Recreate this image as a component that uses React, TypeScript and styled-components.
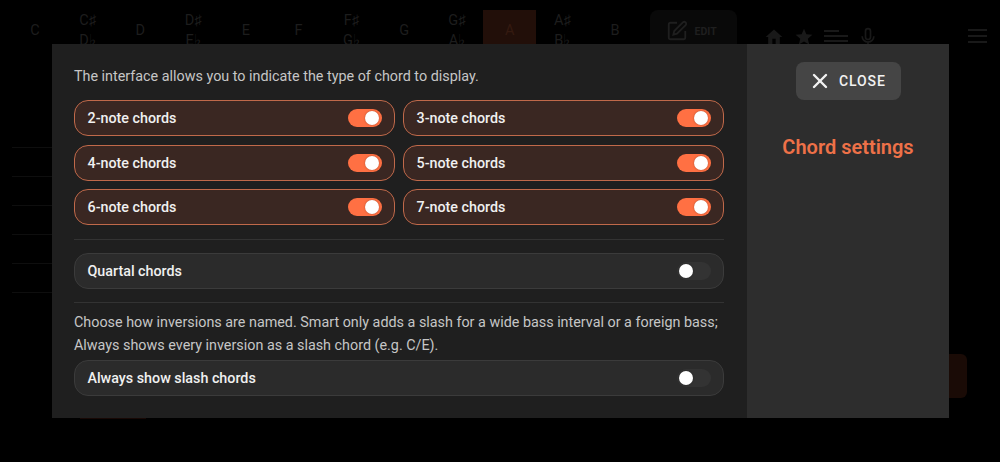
import React from 'react';
import styled, { createGlobalStyle } from 'styled-components';
import { X } from 'lucide-react';

const ORANGE = '#ff7043';
const NOTES = [['C'], ['C♯', 'D♭'], ['D'], ['D♯', 'E♭'], ['E'], ['F'], ['F♯', 'G♭'], ['G'], ['G♯', 'A♭'], ['A'], ['A♯', 'B♭'], ['B']];
const CHORDS = ['2-note chords', '3-note chords', '4-note chords', '5-note chords', '6-note chords', '7-note chords'];

const GlobalStyle = createGlobalStyle`
    html, body { margin: 0; padding: 0; background: #000; }
    body { font-family: Roboto, "Liberation Sans", sans-serif; }
`;

const Page = styled.div`
    position: relative;
    width: 1000px;
    height: 462px;
    overflow: hidden;
    background: #000;
`;

const TopBar = styled.div`
    display: flex;
    align-items: flex-start;
    padding: 10px 0 0 8.5px;
`;

const NoteCell = styled.div<{ $active?: boolean }>`
    width: 52.75px;
    height: 42px;
    flex: none;
    display: flex;
    flex-direction: column;
    align-items: center;
    justify-content: center;
    font-size: 14.5px;
    line-height: 20px;
    color: ${p => (p.$active ? '#351a10' : '#1d1d1d')};
    background: ${p => (p.$active ? '#220f09' : 'transparent')};
`;

const EditBox = styled.div`
    width: 87px;
    height: 42px;
    margin-left: 8px;
    flex: none;
    display: flex;
    align-items: center;
    gap: 7px;
    padding-left: 16px;
    box-sizing: border-box;
    border-radius: 8px;
    background: #090909;
    color: #1f1f1f;
    font-size: 10.5px;
    font-weight: 700;
`;

const IconGroup = styled.div`
    display: flex;
    align-items: center;
    gap: 10px;
    margin: 16px 0 0 27px;
    color: #191919;
`;

const Burger = styled.div`
    margin: 19px 0 0 90px;
    width: 19px;
    height: 14px;
    border-top: 2px solid #191919;
    border-bottom: 2px solid #191919;
    position: relative;
    box-sizing: border-box;
    &::after {
        content: "";
        position: absolute;
        left: 0;
        right: 0;
        top: 4px;
        height: 2px;
        background: #191919;
    }
`;

const Staff = styled.div`
    display: flex;
    flex-direction: column;
    gap: 28px;
    width: 40px;
    margin: 95px 0 0 12px;
`;

const StaffLine = styled.div`
    height: 1px;
    background: #0e0e0e;
`;

const GhostButton = styled.div`
    position: absolute;
    left: 940px;
    top: 354px;
    width: 27px;
    height: 44px;
    border-radius: 6px;
    background: #1a0b06;
`;

const GhostEdge = styled.div`
    position: absolute;
    left: 80px;
    top: 418px;
    width: 66px;
    height: 1px;
    background: #180805;
`;

const Modal = styled.div`
    position: absolute;
    left: 51.5px;
    top: 44px;
    width: 897.5px;
    height: 374px;
    display: flex;
    background: #1f1f1f;
`;

const Content = styled.div`
    width: 695.5px;
    flex: none;
    box-sizing: border-box;
    padding: 21px 23px 0 22.5px;
`;

const Side = styled.aside`
    flex: 1;
    display: flex;
    flex-direction: column;
    align-items: center;
    padding-top: 18px;
    background: #2d2d2d;
`;

const CloseButton = styled.button`
    width: 105px;
    height: 38px;
    padding: 0 0 0 12px;
    border: 0;
    border-radius: 8px;
    display: flex;
    align-items: center;
    gap: 7.5px;
    background: #454545;
    color: #f2f2f2;
    font-family: inherit;
    font-size: 14px;
    font-weight: 500;
    letter-spacing: 0.9px;
`;

const SideTitle = styled.h2`
    margin: 34px 0 0;
    font-size: 20px;
    line-height: 26px;
    font-weight: 600;
    color: #ee7148;
`;

const Help = styled.p`
    margin: 0;
    font-size: 14.35px;
    line-height: 23px;
    white-space: nowrap;
    color: #c6c6c6;
`;

const ChordGrid = styled.div`
    display: grid;
    grid-template-columns: 321px 321px;
    gap: 8.7px 8px;
    margin: 12px 0 13.6px;
`;

const Row = styled.div<{ $on?: boolean }>`
    height: 36px;
    box-sizing: border-box;
    padding: 0 12px 0 12.5px;
    display: flex;
    align-items: center;
    justify-content: space-between;
    border-radius: 14px;
    border: 1px solid ${p => (p.$on ? '#c0694a' : '#3b3b3b')};
    background: ${p => (p.$on ? '#3a2722' : '#2b2b2b')};
    color: #f0f0f0;
    font-size: 14.3px;
    font-weight: 500;
`;

const Track = styled.span<{ $on?: boolean }>`
    position: relative;
    width: 34px;
    height: 18px;
    border-radius: 9px;
    background: ${p => (p.$on ? ORANGE : '#333')};
`;

const Thumb = styled.span<{ $on?: boolean }>`
    position: absolute;
    top: 2px;
    left: ${p => (p.$on ? '17px' : '2px')};
    width: 14px;
    height: 14px;
    border-radius: 50%;
    background: #fff;
    box-shadow: 0 0 2px rgba(0, 0, 0, 0.35);
`;

const Divider = styled.hr`
    margin: 0 0 13px;
    height: 1px;
    border: 0;
    background: #333;
`;

const SecondDivider = styled(Divider)`
    margin-top: 13px;
`;

const InversionHelp = styled(Help)`
    margin: -5px 0 3px;
`;

function Toggle({ label, on }: { label: string; on?: boolean }) {
    return (
        <Row $on={on}>
            {label}
            <Track $on={on}><Thumb $on={on} /></Track>
        </Row>
    );
}

export default function App() {
    return (
        <Page>
            <GlobalStyle />
            <TopBar>
                {NOTES.map(names => (
                    <NoteCell key={names[0]} $active={names[0] === 'A'}>
                        {names.map(n => <span key={n}>{n}</span>)}
                    </NoteCell>
                ))}
                <EditBox>
                    <svg width="22" height="22" viewBox="0 0 24 24" fill="none" stroke="currentColor" strokeWidth="2">
                        <path d="M12 3H5a2 2 0 0 0-2 2v14a2 2 0 0 0 2 2h14a2 2 0 0 0 2-2v-7" />
                        <path d="M18.4 2.6a2.1 2.1 0 0 1 3 3L12 15l-4 1 1-4z" />
                    </svg>
                    EDIT
                </EditBox>
                <IconGroup>
                    <svg width="20" height="20" viewBox="0 0 24 24" fill="currentColor"><path d="M10 21v-7h4v7h5v-9h3L12 3 2 12h3v9z" /></svg>
                    <svg width="20" height="20" viewBox="0 0 24 24" fill="currentColor"><path d="M12 17.3 18.2 21l-1.6-7L22 9.2l-7.2-.6L12 2 9.2 8.6 2 9.2 7.5 14l-1.7 7z" /></svg>
                    <svg width="24" height="20" viewBox="0 0 24 20" fill="currentColor"><path d="M0 3h15v2H0zM0 8h24v2H0zM0 13h24v2H0z" /></svg>
                    <svg width="20" height="22" viewBox="0 0 24 24" fill="none" stroke="currentColor" strokeWidth="2"><rect x="9" y="2" width="6" height="13" rx="3" /><path d="M5 11a7 7 0 0 0 14 0M12 18v4" /></svg>
                </IconGroup>
                <Burger />
            </TopBar>
            <Staff>
                {[0, 1, 2, 3, 4, 5].map(i => <StaffLine key={i} />)}
            </Staff>
            <GhostButton />
            <GhostEdge />
            <Modal>
                <Content>
                    <Help>The interface allows you to indicate the type of chord to display.</Help>
                    <ChordGrid>
                        {CHORDS.map(c => <Toggle key={c} label={c} on />)}
                    </ChordGrid>
                    <Divider />
                    <Toggle label="Quartal chords" />
                    <SecondDivider />
                    <InversionHelp>
                        Choose how inversions are named. Smart only adds a slash for a wide bass interval or a foreign bass;<br />
                        Always shows every inversion as a slash chord (e.g. C/E).
                    </InversionHelp>
                    <Toggle label="Always show slash chords" />
                </Content>
                <Side>
                    <CloseButton><X size={24} strokeWidth={2.4} />CLOSE</CloseButton>
                    <SideTitle>Chord settings</SideTitle>
                </Side>
            </Modal>
        </Page>
    );
}
